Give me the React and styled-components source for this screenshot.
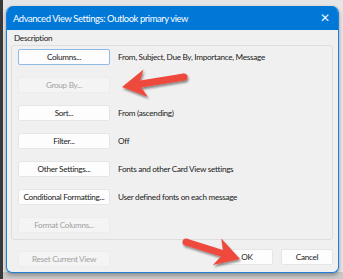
import styled, { createGlobalStyle } from 'styled-components'

const Global = createGlobalStyle`
  html, body { margin: 0; padding: 0; }
  body {
    width: 343px;
    height: 279px;
    overflow: hidden;
    background: #e4e4e4;
    font-family: Lato, "Noto Sans", sans-serif;
  }
`

const Page = styled.div`
  position: relative;
  width: 343px;
  height: 279px;
  padding: 6px 4px 0 3px;
  box-sizing: border-box;
  border-left: 3px solid #3a3a3a;
  background: linear-gradient(#e6e6e6 0 272px, #c9c9c9 272px);
`

const Dialog = styled.div`
  width: 333px;
  height: 267px;
  box-sizing: border-box;
  border: 1px solid #1f7fd8;
  border-top: none;
  border-radius: 7px 7px 6px 6px;
  background: #f0f0f0;
  display: flex;
  flex-direction: column;
  overflow: hidden;
  box-shadow: 0 2px 4px rgba(0, 0, 0, 0.35);
`

const TitleBar = styled.div`
  height: 24px;
  background: #0078d7;
  color: #fff;
  display: flex;
  align-items: center;
  justify-content: space-between;
  padding: 0 8px 0 6px;
  font-size: 9.4px;
  letter-spacing: -0.4px;
  flex-shrink: 0;
`

const Close = styled.span`
  font-size: 12px;
  line-height: 1;
  color: #e8f1fb;
`

const Body = styled.div`
  flex: 1;
  display: flex;
  flex-direction: column;
  padding: 2px 5px 0 4px;
`

const Legend = styled.div`
  font-size: 8.2px;
  letter-spacing: -0.3px;
  color: #1a1a1a;
  height: 13px;
  line-height: 13px;
  padding-left: 3px;
`

const GroupBox = styled.div`
  border: 1px solid #dedede;
  border-radius: 3px;
  display: flex;
  flex-direction: column;
  gap: 12px;
  padding: 3px 6px 6px 6px;
`

const Row = styled.div`
  display: flex;
  align-items: center;
  gap: 8px;
  height: 16px;
`

const Button = styled.div`
  box-sizing: border-box;
  width: ${(p) => p.$w || 92}px;
  height: 16px;
  display: flex;
  align-items: center;
  justify-content: center;
  font-size: 8.2px;
  letter-spacing: -0.3px;
  white-space: nowrap;
  border-radius: 2px;
  background: ${(p) => (p.$disabled ? '#f4f4f4' : '#fdfdfd')};
  color: ${(p) => (p.$disabled ? '#a2a2a2' : '#1b1b1b')};
  border: 1px solid
    ${(p) => (p.$default ? '#8dbbe6' : p.$disabled ? '#ececec' : '#e6e6e6')};
`

const Info = styled.span`
  font-size: 8.2px;
  letter-spacing: -0.3px;
  color: #1b1b1b;
  white-space: nowrap;
`

const Footer = styled.div`
  display: flex;
  align-items: flex-start;
  padding: 11px 0 0 7px;
`

const Actions = styled.div`
  margin-left: auto;
  display: flex;
  gap: 8px;
  margin-top: -2px;
`

const Overlay = styled.svg`
  position: absolute;
  left: 0;
  top: 0;
  pointer-events: none;
`

const rows = [
  { label: 'Columns...', info: 'From, Subject, Due By, Importance, Message', def: true },
  { label: 'Group By...', disabled: true },
  { label: 'Sort...', info: 'From (ascending)' },
  { label: 'Filter...', info: 'Off' },
  { label: 'Other Settings...', info: 'Fonts and other Card View settings' },
  { label: 'Conditional Formatting...', info: 'User defined fonts on each message' },
  { label: 'Format Columns...', disabled: true },
]

function arrowPath(tip, tail, headLen, headHalf, shaftHalf) {
  const dx = tail[0] - tip[0]
  const dy = tail[1] - tip[1]
  const len = Math.hypot(dx, dy)
  const ux = dx / len
  const uy = dy / len
  const nx = -uy
  const ny = ux
  const bx = tip[0] + ux * headLen
  const by = tip[1] + uy * headLen
  const sx = bx - ux * 5
  const sy = by - uy * 5
  const p = (x, y) => `${x.toFixed(1)},${y.toFixed(1)}`
  return [
    p(tip[0], tip[1]),
    p(bx + nx * headHalf, by + ny * headHalf),
    p(sx + nx * shaftHalf, sy + ny * shaftHalf),
    p(tail[0] + nx * shaftHalf, tail[1] + ny * shaftHalf),
    p(tail[0] - nx * shaftHalf, tail[1] - ny * shaftHalf),
    p(sx - nx * shaftHalf, sy - ny * shaftHalf),
    p(bx - nx * headHalf, by - ny * headHalf),
  ].join(' ')
}

const Arrow = ({ tip, tail }) => (
  <g filter="url(#shadow)">
    <polygon points={arrowPath(tip, tail, 24, 14, 3.5)} fill="#ee4a3d" />
    <circle cx={tail[0]} cy={tail[1]} r="3.5" fill="#ee4a3d" />
  </g>
)

export default function App() {
  return (
    <>
      <Global />
      <Page>
        <Dialog>
          <TitleBar>
            <span>Advanced View Settings: Outlook primary view</span>
            <Close>✕</Close>
          </TitleBar>
          <Body>
            <Legend>Description</Legend>
            <GroupBox>
              {rows.map((r) => (
                <Row key={r.label}>
                  <Button $disabled={r.disabled} $default={r.def}>
                    {r.label}
                  </Button>
                  {r.info && <Info>{r.info}</Info>}
                </Row>
              ))}
            </GroupBox>
            <Footer>
              <Button $disabled>Reset Current View</Button>
              <Actions>
                <Button $w={52}>OK</Button>
                <Button $w={52}>Cancel</Button>
              </Actions>
            </Footer>
          </Body>
        </Dialog>
        <Overlay width="343" height="279" viewBox="0 0 343 279">
          <defs>
            <filter id="shadow" x="-20%" y="-20%" width="140%" height="160%">
              <feDropShadow dx="1" dy="2" stdDeviation="1.3" floodColor="#000" floodOpacity="0.45" />
            </filter>
          </defs>
          <Arrow tip={[119, 87]} tail={[181, 77]} />
          <Arrow tip={[237, 259]} tail={[183, 242]} />
        </Overlay>
      </Page>
    </>
  )
}
